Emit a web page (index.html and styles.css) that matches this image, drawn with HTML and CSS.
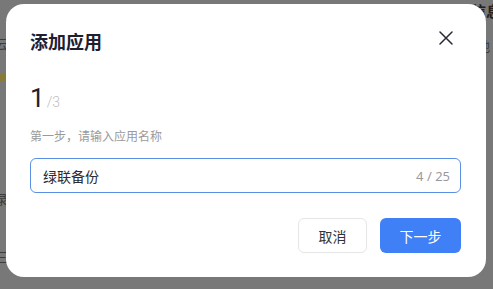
FILE: index.html
```html
<!DOCTYPE html>
<html lang="zh-CN">
<head>
<meta charset="utf-8">
<title>添加应用</title>
<link rel="stylesheet" href="styles.css">
</head>
<body>
<div class="page">
  <div class="side">
    <div class="side-item s1">存储空间云</div>
    <div class="side-item s2"><span class="folder"></span></div>
    <div class="side-item s3">登录</div>
    <div class="side-item s4">三</div>
  </div>
  <div class="aside">
    <div class="aside-title">基本信息</div>
    <div class="aside-item">所在地</div>
  </div>
</div>

<div class="modal">
  <div class="modal-head">
    <h1 class="modal-title">添加应用</h1>
    <button class="close" aria-label="关闭">
      <svg width="14" height="14" viewBox="0 0 14 14"><path d="M1 1 L13 13 M13 1 L1 13" stroke="#2a2a35" stroke-width="1.5" fill="none" stroke-linecap="round"/></svg>
    </button>
  </div>
  <div class="step"><span class="step-cur">1</span><span class="step-total">/3</span></div>
  <div class="label">第一步，请输入应用名称</div>
  <div class="input">
    <span class="input-text">绿联备份</span>
    <span class="counter">4 / 25</span>
  </div>
  <div class="actions">
    <button class="btn btn-cancel">取消</button>
    <button class="btn btn-primary">下一步</button>
  </div>
</div>
</body>
</html>
```
FILE: styles.css
```css
html, body {
  margin: 0;
  padding: 0;
}
body {
  width: 493px;
  height: 289px;
  overflow: hidden;
  background: #787878;
  font-family: "Noto Sans CJK SC", "Noto Sans", sans-serif;
  position: relative;
}
.page {
  display: flex;
  justify-content: space-between;
  height: 289px;
}
.side {
  margin-left: -64px;
  width: 72px;
  display: flex;
  flex-direction: column;
  text-align: right;
  color: #3c3c3c;
  font-size: 13px;
  line-height: 16px;
}
.side-item.s1 { margin-top: 36px; }
.side-item.s2 { margin-top: 16px; height: 14px; }
.side-item.s3 { margin-top: 109px; }
.side-item.s4 { margin-top: 42px; }
.folder {
  display: inline-block;
  width: 10px;
  height: 8px;
  background: #8a7a3a;
  margin-right: -2px;
}
.aside {
  width: 40px;
  margin-right: -16px;
  color: #3c3c3c;
  font-size: 14px;
}
.aside-title {
  margin-top: 2px;
  font-weight: 700;
  font-size: 15px;
  line-height: 18px;
  color: #222;
  white-space: nowrap;
  margin-left: -28px;
}
.aside-item {
  margin-top: 16px;
  margin-left: -18px;
  white-space: nowrap;
  font-size: 13px;
}

.modal {
  position: absolute;
  left: 6px;
  top: 4px;
  width: 480px;
  height: 273px;
  box-sizing: border-box;
  padding: 24px 25px 24px 24px;
  background: #fff;
  border-radius: 18px;
  display: flex;
  flex-direction: column;
}
.modal-head {
  display: flex;
  justify-content: space-between;
  align-items: flex-start;
  height: 26px;
}
.modal-title {
  margin: 0;
  font-size: 18px;
  line-height: 26px;
  font-weight: 700;
  color: #1e2030;
}
.close {
  border: 0;
  background: none;
  padding: 0;
  margin: 3px 8px 0 0;
  width: 14px;
  height: 14px;
  display: flex;
}
.step {
  margin-top: 31px;
  height: 26px;
  line-height: 26px;
  font-family: Roboto, "Noto Sans", sans-serif;
  color: #1e2030;
}
.step-cur {
  font-size: 26px;
  font-weight: 400;
}
.step-total {
  font-size: 14px;
  color: #bdbdbd;
  margin-left: 2px;
  font-weight: 300;
}
.label {
  margin-top: 16px;
  font-size: 12px;
  line-height: 18px;
  color: #9a9a9a;
}
.input {
  margin-top: 13px;
  height: 35px;
  box-sizing: border-box;
  border: 1px solid #5b8fe3;
  border-radius: 6px;
  padding: 0 10px 0 12px;
  display: flex;
  align-items: center;
  justify-content: space-between;
}
.input-text {
  font-size: 14px;
  color: #2b2b33;
}
.counter {
  font-size: 13px;
  color: #9a9a9a;
  font-family: "Noto Sans", sans-serif;
}
.actions {
  margin-top: 25px;
  display: flex;
  justify-content: flex-end;
  gap: 13px;
}
.btn {
  height: 35px;
  border-radius: 6px;
  font-family: "Noto Sans CJK SC", sans-serif;
  font-size: 14px;
  padding: 0;
  cursor: pointer;
}
.btn-cancel {
  width: 69px;
  background: #fff;
  border: 1px solid #e6e6e6;
  color: #333;
}
.btn-primary {
  width: 81px;
  background: #3f80f6;
  border: 0;
  color: #fff;
}
```
